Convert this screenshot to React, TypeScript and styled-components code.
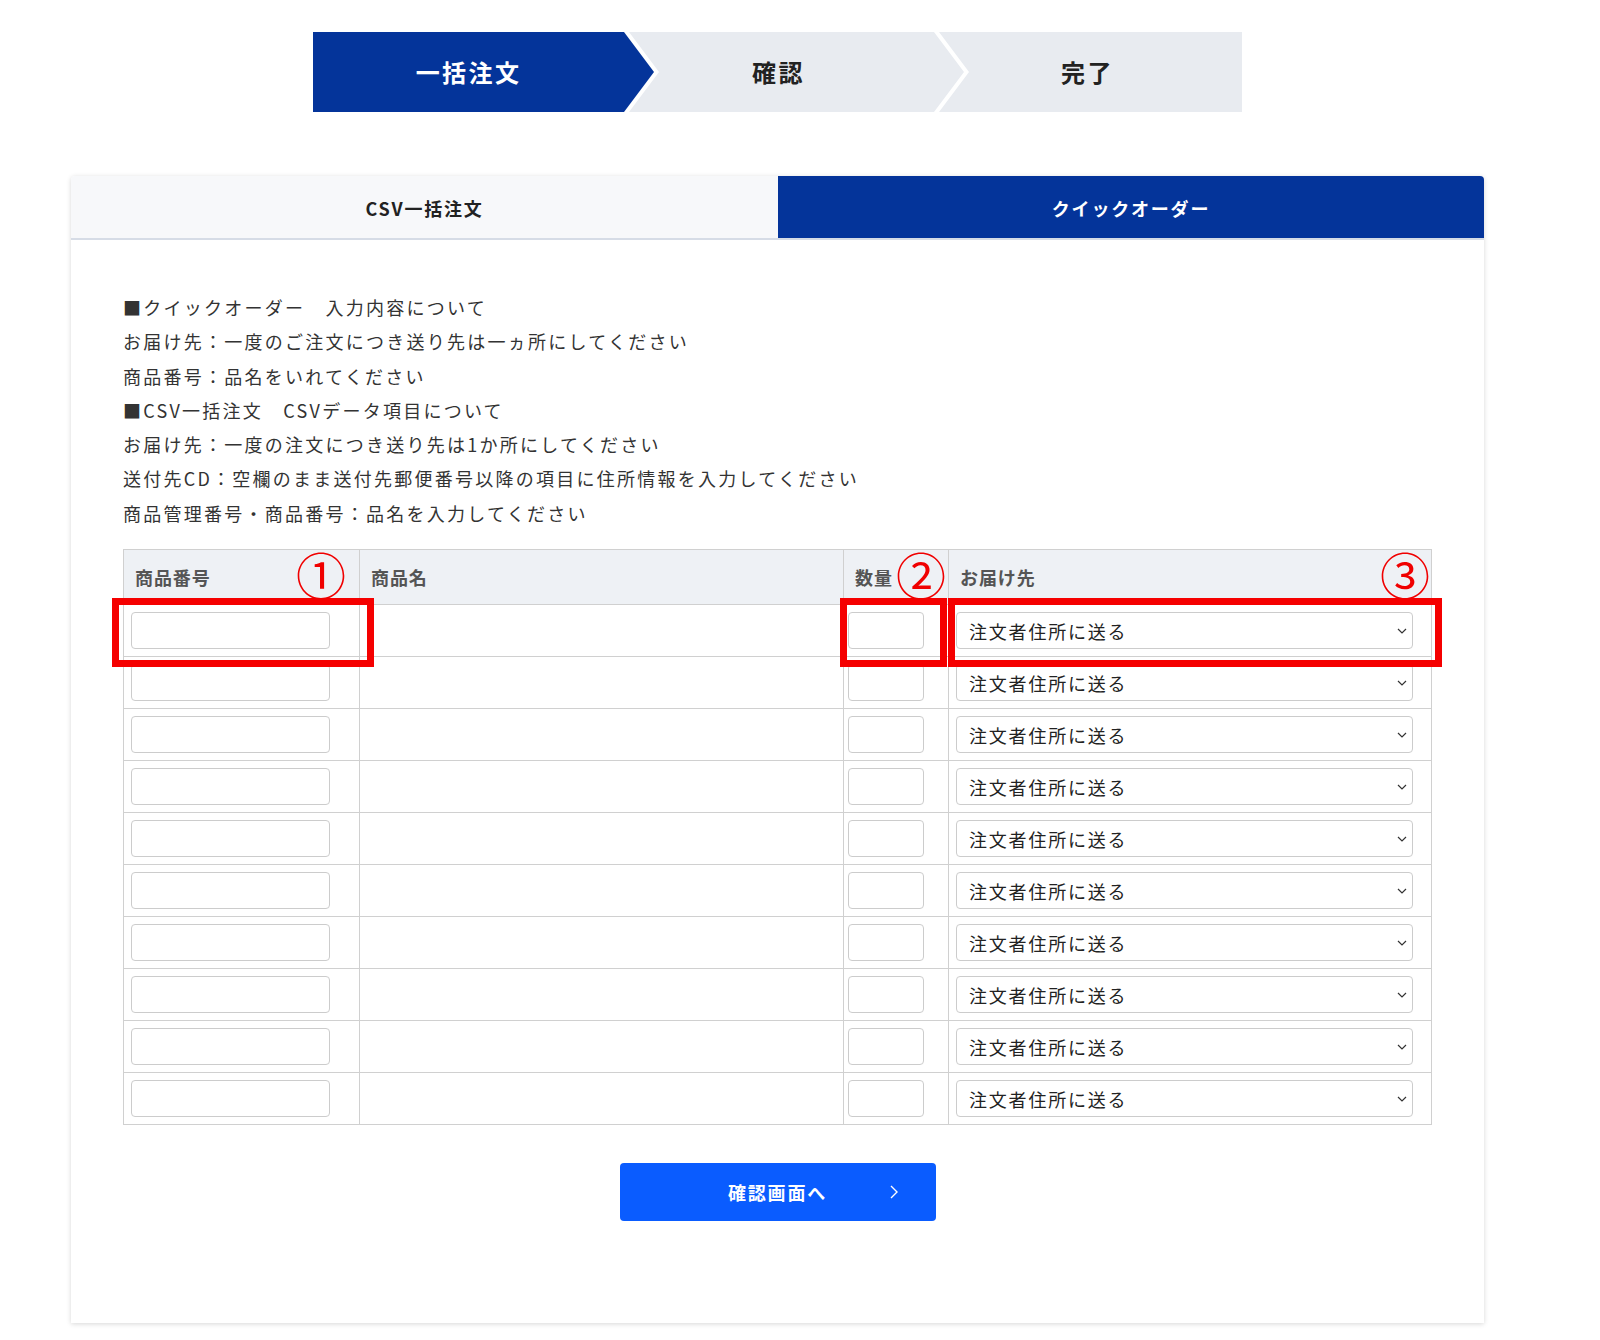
import styled, { createGlobalStyle } from "styled-components";

const GlobalStyle = createGlobalStyle`
  body {
    margin: 0;
    background: #fff;
    font-family: "Noto Sans CJK JP", "Noto Sans", sans-serif;
    color: #333;
  }
`;

const steps = ["一括注文", "確認", "完了"];
const notes = [
  "■クイックオーダー　入力内容について",
  "お届け先：一度のご注文につき送り先は一ヵ所にしてください",
  "商品番号：品名をいれてください",
  "■CSV一括注文　CSVデータ項目について",
  "お届け先：一度の注文につき送り先は1か所にしてください",
  "送付先CD：空欄のまま送付先郵便番号以降の項目に住所情報を入力してください",
  "商品管理番号・商品番号：品名を入力してください",
];
const rows = Array.from({ length: 10 }, (_, i) => i);

const App = () => {
  return (
    <>
      <GlobalStyle />
      <Main>
        <StepBar>
          {steps.map((s, i) => (
            <Step
              key={s}
              $active={i === 0}
              $pos={i === 0 ? "first" : i === steps.length - 1 ? "last" : "middle"}
            >
              {s}
            </Step>
          ))}
        </StepBar>

        <Card>
          <Tabs>
            <Tab $side='left'>CSV一括注文</Tab>
            <Tab $side='right' $active>
              クイックオーダー
            </Tab>
          </Tabs>

          <Body>
            <Notes>
              {notes.map((n) => (
                <p key={n}>{n}</p>
              ))}
            </Notes>

            <TableWrap>
              <OrderTable>
                <colgroup>
                  <col style={{ width: 236 }} />
                  <col style={{ width: 484 }} />
                  <col style={{ width: 105 }} />
                  <col />
                </colgroup>
                <thead>
                  <tr>
                    <th>商品番号</th>
                    <th>商品名</th>
                    <th>数量</th>
                    <th>お届け先</th>
                  </tr>
                </thead>
                <tbody>
                  {rows.map((r) => (
                    <tr key={r}>
                      <Td>
                        <TextInput $w={199} />
                      </Td>
                      <Td />
                      <Td $padLeft={4}>
                        <TextInput $w={76} />
                      </Td>
                      <Td>
                        <SelectWrap>
                          <Select defaultValue='self'>
                            <option value='self'>注文者住所に送る</option>
                          </Select>
                          <Chevron viewBox='0 0 10 6' width='10' height='6'>
                            <path
                              d='M1 1l4 4 4-4'
                              fill='none'
                              stroke='#333'
                              strokeWidth='1.2'
                            />
                          </Chevron>
                        </SelectWrap>
                      </Td>
                    </tr>
                  ))}
                </tbody>
              </OrderTable>

              {/* 説明用の赤枠と番号 */}
              <Mark $x={-11} $w={262} />
              <Mark $x={717} $w={107} />
              <Mark $x={825} $w={494} />
              <Num $x={198}>①</Num>
              <Num $x={798}>②</Num>
              <Num $x={1282}>③</Num>
            </TableWrap>

            <ButtonRow>
              <NextButton>
                確認画面へ
                <ButtonArrow viewBox='0 0 8 14' width='8' height='14'>
                  <path d='M1 1l6 6-6 6' fill='none' stroke='#fff' strokeWidth='1.4' />
                </ButtonArrow>
              </NextButton>
            </ButtonRow>
          </Body>
        </Card>
      </Main>
    </>
  );
};

export default App;

const Main = styled.div`
  width: 1413px;
  margin-left: 71px;
  padding-top: 32px;
  padding-bottom: 16px;
`;

const StepBar = styled.div`
  display: flex;
  width: 929px;
  height: 80px;
  margin: 0 auto;
`;

const Step = styled.div<{ $active?: boolean; $pos: "first" | "middle" | "last" }>`
  flex: none;
  display: flex;
  align-items: center;
  justify-content: center;
  box-sizing: border-box;
  width: ${({ $pos }) => ($pos === "first" ? 341 : $pos === "middle" ? 335 : 303)}px;
  margin-left: ${({ $pos }) => ($pos === "first" ? 0 : -25)}px;
  padding-right: ${({ $pos }) => ($pos === "first" ? 30 : $pos === "middle" ? 36 : 6)}px;
  padding-bottom: 2px;
  background: ${({ $active }) => ($active ? "#04349a" : "#e8ebf0")};
  color: ${({ $active }) => ($active ? "#fff" : "#222")};
  font-size: 24px;
  font-weight: 700;
  letter-spacing: 0.1em;
  clip-path: ${({ $pos }) =>
    $pos === "first"
      ? "polygon(0 0, calc(100% - 30px) 0, 100% 50%, calc(100% - 30px) 100%, 0 100%)"
      : $pos === "middle"
      ? "polygon(0 0, calc(100% - 30px) 0, 100% 50%, calc(100% - 30px) 100%, 0 100%, 30px 50%)"
      : "polygon(0 0, 100% 0, 100% 100%, 0 100%, 30px 50%)"};
`;

const Card = styled.div`
  margin-top: 64px;
  background: #fff;
  border-radius: 4px 4px 0 0;
  box-shadow: 0 1px 5px rgba(0, 0, 0, 0.16);
`;

const Tabs = styled.div`
  display: grid;
  grid-template-columns: 707px 1fr;
  border-bottom: 2px solid #d6dce6;
`;

const Tab = styled.div<{ $active?: boolean; $side: "left" | "right" }>`
  height: 62px;
  padding-top: 2px;
  box-sizing: border-box;
  display: flex;
  align-items: center;
  justify-content: center;
  font-size: 18px;
  font-weight: 700;
  letter-spacing: 0.1em;
  background: ${({ $active }) => ($active ? "#04349a" : "#f7f8fa")};
  color: ${({ $active }) => ($active ? "#fff" : "#222")};
  border-radius: ${({ $side }) => ($side === "left" ? "4px 0 0 0" : "0 4px 0 0")};
`;

const Body = styled.div`
  padding: 50px 52px 102px;
`;

const Notes = styled.div`
  p {
    margin: 0;
    font-size: 18px;
    line-height: 34.3px;
    letter-spacing: 0.125em;
    color: #333;
  }
`;

const TableWrap = styled.div`
  position: relative;
  margin-top: 19px;
`;

const OrderTable = styled.table`
  width: 1309px;
  table-layout: fixed;
  border-collapse: collapse;
  border: 1px solid #d0d0d0;

  th {
    height: 54px;
    padding: 0 0 0 11px;
    background: #eef1f5;
    border: 1px solid #d0d0d0;
    text-align: left;
    font-size: 18px;
    font-weight: 700;
    letter-spacing: 0.05em;
    color: #555;
  }
`;

const Td = styled.td<{ $padLeft?: number }>`
  height: 51px;
  box-sizing: border-box;
  padding: 7px 0 7px ${({ $padLeft }) => $padLeft ?? 7}px;
  border: 1px solid #d0d0d0;
  vertical-align: middle;
`;

const TextInput = styled.input<{ $w: number }>`
  display: block;
  box-sizing: border-box;
  width: ${({ $w }) => $w}px;
  height: 37px;
  border: 1px solid #ccc;
  border-radius: 4px;
  background: #fff;
  font: inherit;
`;

const SelectWrap = styled.div`
  position: relative;
  width: 457px;
`;

const Select = styled.select`
  display: block;
  appearance: none;
  box-sizing: border-box;
  width: 100%;
  height: 37px;
  padding: 0 30px 0 12px;
  border: 1px solid #ccc;
  border-radius: 4px;
  background: #fff;
  font-family: "Noto Sans CJK JP", sans-serif;
  font-size: 18px;
  letter-spacing: 0.1em;
  color: #222;
`;

const Chevron = styled.svg`
  position: absolute;
  right: 6px;
  top: 16px;
  pointer-events: none;
`;

const Mark = styled.div<{ $x: number; $w: number }>`
  position: absolute;
  top: 49px;
  left: ${({ $x }) => $x}px;
  width: ${({ $w }) => $w}px;
  height: 69px;
  box-sizing: border-box;
  border: 7px solid #f50000;
  pointer-events: none;
`;

const Num = styled.span<{ $x: number }>`
  position: absolute;
  top: 24px;
  left: ${({ $x }) => $x}px;
  transform: translate(-50%, -50%);
  font-family: "Noto Sans CJK JP", sans-serif;
  font-size: 50px;
  line-height: 1;
  font-weight: 400;
  color: #f00000;
`;

const ButtonRow = styled.div`
  display: flex;
  justify-content: center;
  width: 1309px;
  margin-top: 38px;
`;

const NextButton = styled.button`
  position: relative;
  width: 316px;
  height: 58px;
  border: none;
  border-radius: 4px;
  background: #0a5cff;
  color: #fff;
  font-family: "Noto Sans CJK JP", sans-serif;
  font-size: 18px;
  font-weight: 700;
  letter-spacing: 0.1em;
`;

const ButtonArrow = styled.svg`
  position: absolute;
  right: 38px;
  top: 22px;
`;
